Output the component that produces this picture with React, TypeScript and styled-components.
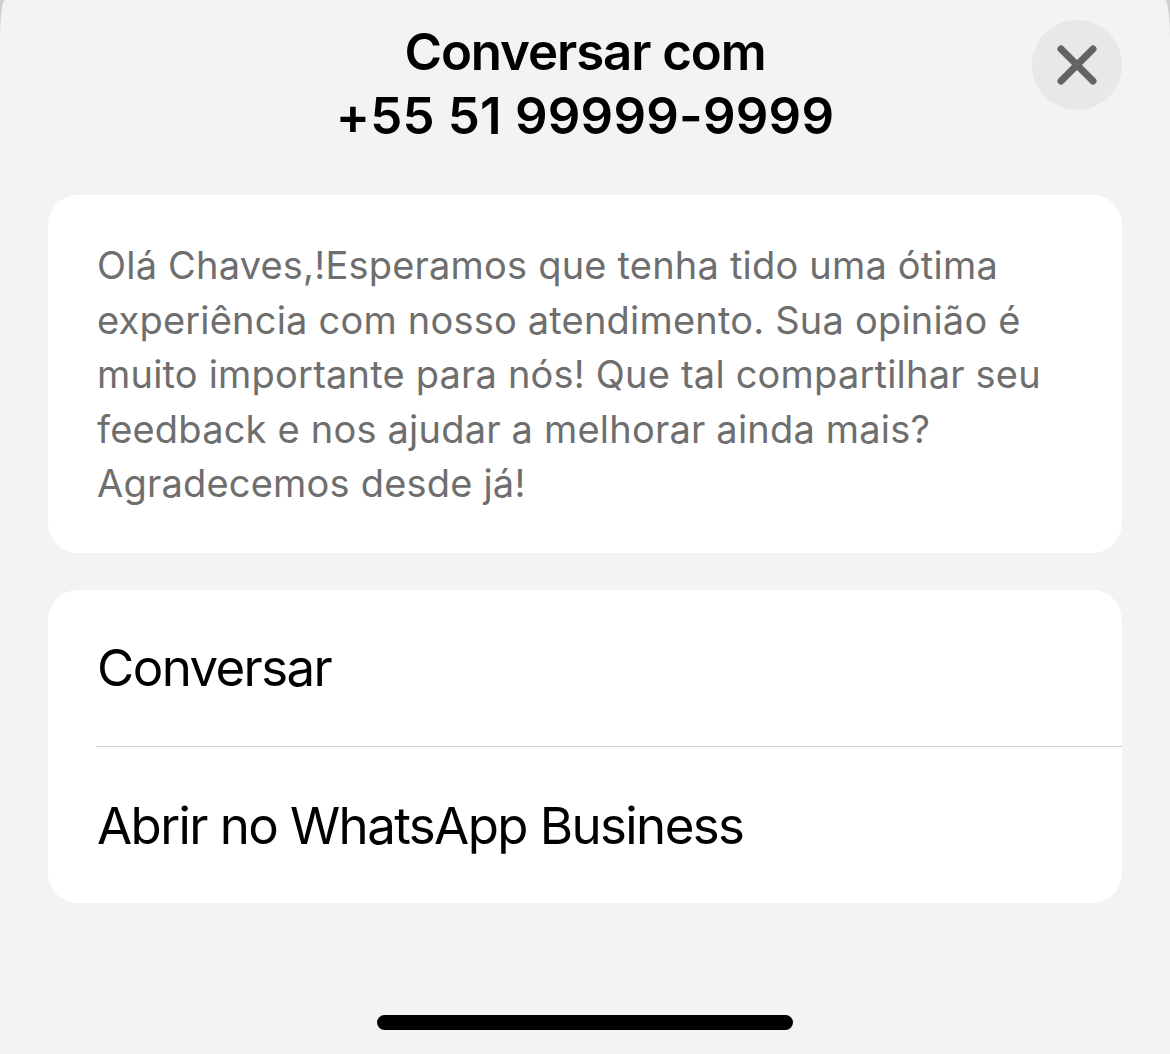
import React from "react";
import styled, { createGlobalStyle } from "styled-components";

const GlobalStyle = createGlobalStyle`
  html, body {
    margin: 0;
    padding: 0;
    background: #cfcfcf;
  }
  body {
    font-family: Inter, "Noto Sans", "Liberation Sans", sans-serif;
    -webkit-font-smoothing: antialiased;
  }
`;

const Sheet = styled.div`
  display: flex;
  flex-direction: column;
  width: 1170px;
  min-height: 1054px;
  box-sizing: border-box;
  background: #f3f3f3;
  border-top-left-radius: 5px 40px;
  border-top-right-radius: 5px 40px;
  padding: 20px 48px 24px;
`;

const Header = styled.header`
  display: grid;
  grid-template-columns: 1fr auto 1fr;
  align-items: start;
`;

const Title = styled.h1`
  grid-column: 2;
  margin: 0;
  font-size: 51px;
  line-height: 64px;
  font-weight: 600;
  color: #000;
  text-align: center;
`;

const TitleLine = styled.span<{ $tracking: number }>`
  display: block;
  letter-spacing: ${(p) => p.$tracking}px;
`;

const CloseButton = styled.button`
  grid-column: 3;
  justify-self: end;
  width: 90px;
  height: 90px;
  border: 0;
  padding: 0;
  border-radius: 50%;
  background: #e8e8e8;
  display: flex;
  align-items: center;
  justify-content: center;
  cursor: pointer;
`;

const Card = styled.section<{ $gap?: number }>`
  background: #fff;
  border-radius: 30px;
  margin-top: ${(p) => p.$gap ?? 0}px;
  overflow: hidden;
`;

const Message = styled.p`
  margin: 0;
  padding: 43px 30px 42px 49px;
  font-size: 38px;
  line-height: 54.5px;
  letter-spacing: 0.2px;
  color: #6e6e6e;
  white-space: pre-line;
`;

const Option = styled.button`
  display: flex;
  align-items: center;
  width: 100%;
  height: 156px;
  margin: 0;
  padding: 0 0 0 49px;
  border: 0;
  background: transparent;
  font-family: inherit;
  font-size: 51px;
  font-weight: 400;
  letter-spacing: -1.6px;
  color: #000;
  text-align: left;
  cursor: pointer;
  box-sizing: border-box;
`;

const Divider = styled.hr`
  margin: 0 0 0 48px;
  border: 0;
  height: 1.5px;
  background: #cfcfcf;
`;

const Spacer = styled.div`
  flex: 1;
`;

const HomeIndicator = styled.div`
  align-self: center;
  width: 416px;
  height: 15px;
  border-radius: 8px;
  background: #000;
`;

const messageText = `Olá Chaves,!Esperamos que tenha tido uma ótima
experiência com nosso atendimento. Sua opinião é
muito importante para nós! Que tal compartilhar seu
feedback e nos ajudar a melhorar ainda mais?
Agradecemos desde já!`;

const options = ["Conversar", "Abrir no WhatsApp Business"];

export default function App() {
  return (
    <>
      <GlobalStyle />
      <Sheet>
        <Header>
          <Title>
            <TitleLine $tracking={-1.1}>Conversar com</TitleLine>
            <TitleLine $tracking={0.2}>+55 51 99999-9999</TitleLine>
          </Title>
          <CloseButton aria-label="Fechar">
            <svg width="90" height="90" viewBox="0 0 90 90">
              <path
                d="M29 29 L61 61 M61 29 L29 61"
                stroke="#636363"
                strokeWidth="7"
                strokeLinecap="round"
                fill="none"
              />
            </svg>
          </CloseButton>
        </Header>

        <Card $gap={47}>
          <Message>{messageText}</Message>
        </Card>

        <Card $gap={37}>
          {options.map((label, i) => (
            <React.Fragment key={label}>
              {i > 0 && <Divider />}
              <Option>{label}</Option>
            </React.Fragment>
          ))}
        </Card>

        <Spacer />
        <HomeIndicator />
      </Sheet>
    </>
  );
}
